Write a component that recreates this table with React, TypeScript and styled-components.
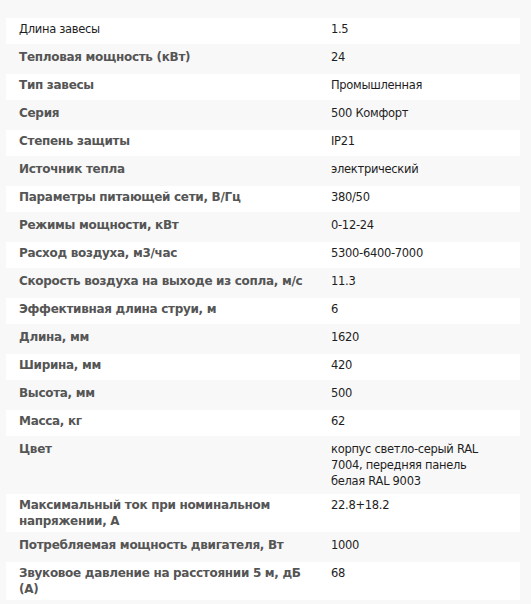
import React from "react";
import styled, { createGlobalStyle } from "styled-components";

const GlobalStyle = createGlobalStyle`
  html, body {
    margin: 0;
    padding: 0;
    background: #f8f8f8;
  }
  body {
    font-family: Tahoma, "DejaVu Sans", Verdana, sans-serif;
    font-size: 12px;
    color: #222;
  }
`;

const Page = styled.div`
  padding: 16px 11px 4px 6px;
`;

const SpecTable = styled.table`
  width: 100%;
  table-layout: fixed;
  border-collapse: separate;
  border-spacing: 0 2px;
`;

const LabelCol = styled.col`
  width: 312px;
`;

const Row = styled.tr`
  background: #ffffff;

  &:nth-child(even) {
    background: transparent;
  }
`;

const Cell = styled.td`
  height: 26px;
  box-sizing: border-box;
  padding: 3px 13px;
  vertical-align: top;
  line-height: 16px;
`;

const Label = styled(Cell)<{ $plain?: boolean }>`
  font-size: ${({ $plain }) => ($plain ? "11.5px" : "12px")};
  letter-spacing: -0.3px;
  font-weight: ${({ $plain }) => ($plain ? 400 : 700)};
  color: ${({ $plain }) => ($plain ? "#1e1e1e" : "#555555")};
`;

const Value = styled(Cell)`
  padding-right: 26px;
  font-size: 11.5px;
  letter-spacing: -0.3px;
  color: #1e1e1e;
`;

const specs: [string, string][] = [
  ["Длина завесы", "1.5"],
  ["Тепловая мощность (кВт)", "24"],
  ["Тип завесы", "Промышленная"],
  ["Серия", "500 Комфорт"],
  ["Степень защиты", "IP21"],
  ["Источник тепла", "электрический"],
  ["Параметры питающей сети, В/Гц", "380/50"],
  ["Режимы мощности, кВт", "0-12-24"],
  ["Расход воздуха, м3/час", "5300-6400-7000"],
  ["Скорость воздуха на выходе из сопла, м/с", "11.3"],
  ["Эффективная длина струи, м", "6"],
  ["Длина, мм", "1620"],
  ["Ширина, мм", "420"],
  ["Высота, мм", "500"],
  ["Масса, кг", "62"],
  ["Цвет", "корпус светло-серый RAL 7004, передняя панель белая RAL 9003"],
  ["Максимальный ток при номинальном напряжении, А", "22.8+18.2"],
  ["Потребляемая мощность двигателя, Вт", "1000"],
  ["Звуковое давление на расстоянии 5 м, дБ (А)", "68"],
];

export default function App() {
  return (
    <Page>
      <GlobalStyle />
      <SpecTable>
        <colgroup>
          <LabelCol />
          <col />
        </colgroup>
        <tbody>
          {specs.map(([name, value], i) => (
            <Row key={name}>
              <Label $plain={i === 0}>{name}</Label>
              <Value>{value}</Value>
            </Row>
          ))}
        </tbody>
      </SpecTable>
    </Page>
  );
}
